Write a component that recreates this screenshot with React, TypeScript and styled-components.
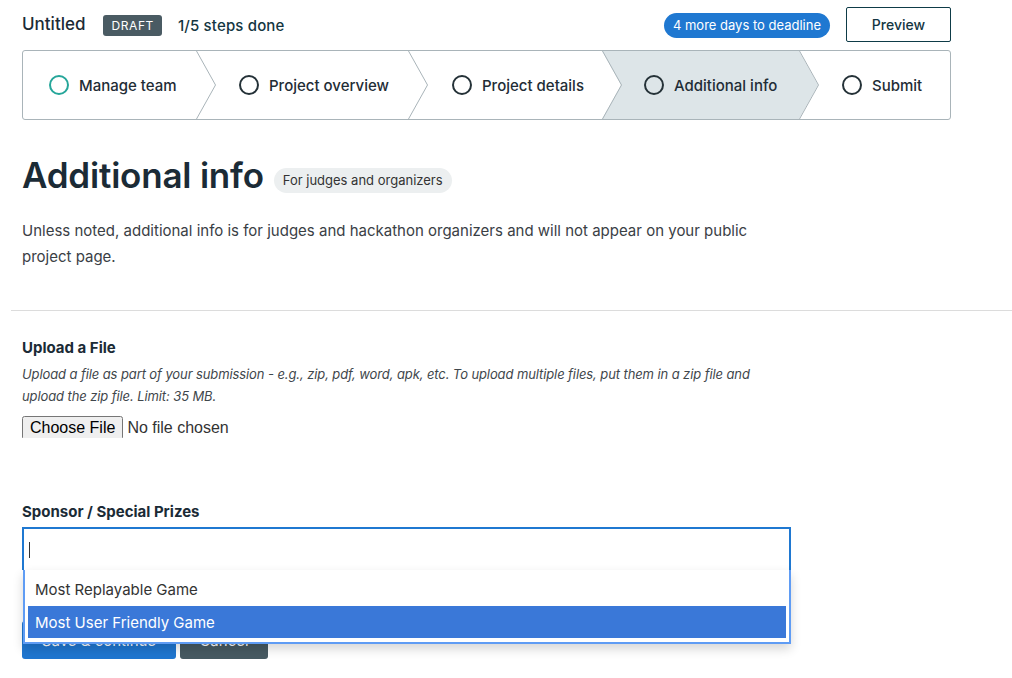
import React from 'react';
import styled, { createGlobalStyle } from 'styled-components';

const Global = createGlobalStyle`
  html, body { margin: 0; padding: 0; background: #fff; }
  body { font-family: Inter, "Noto Sans", sans-serif; color: #1b2b36; }
  * { box-sizing: border-box; }
`;

const Page = styled.div`
  padding-left: 22px;
  width: 1012px;
  display: flex;
  flex-direction: column;
`;

const TopBar = styled.div`
  width: 929px;
  height: 50px;
  display: flex;
  align-items: center;
  justify-content: space-between;
`;

const Group = styled.div<{ $gap: number }>`
  display: flex;
  align-items: center;
  gap: ${p => p.$gap}px;
`;

const Title = styled.div`
  font-size: 17px;
  font-weight: 500;
  color: #1b2b36;
  margin-top: -3px;
  margin-right: 2px;
`;

const Badge = styled.span`
  background: #4a5b63;
  color: #fff;
  font-size: 12px;
  letter-spacing: 0.6px;
  height: 21px;
  padding: 0 8px;
  border-radius: 3px;
  display: inline-flex;
  align-items: center;
`;

const StepsDone = styled.span`
  font-size: 15px;
  font-weight: 500;
  color: #143642;
  letter-spacing: 0.15px;
`;

const Pill = styled.span`
  background: #1f78d1;
  color: #fff;
  font-size: 13px;
  height: 25px;
  padding: 0 9px;
  border-radius: 13px;
  display: inline-flex;
  align-items: center;
`;

const PreviewButton = styled.button`
  width: 105px;
  height: 35px;
  border: 1px solid #0e3b47;
  border-radius: 2px;
  background: #fff;
  color: #143642;
  font-family: inherit;
  font-size: 14px;
  font-weight: 500;
  margin-top: -2px;
`;

const Stepper = styled.div`
  width: 929px;
  height: 70px;
  border: 1px solid #a9b4b9;
  border-radius: 3px;
  display: flex;
  overflow: hidden;
`;

const Step = styled.div<{ $w?: number; $pad: number; $active?: boolean }>`
  position: relative;
  flex: ${p => (p.$w ? `0 0 ${p.$w}px` : '1 1 auto')};
  display: flex;
  align-items: center;
  gap: 10px;
  padding-left: ${p => p.$pad}px;
  font-size: 15px;
  font-weight: 500;
  color: #1f2d36;
  &::before {
    content: '';
    display: ${p => (p.$active ? 'block' : 'none')};
    position: absolute;
    left: 0;
    top: 0;
    bottom: 0;
    width: calc(100% + 19px);
    background: #dde5e8;
    clip-path: polygon(0 0, calc(100% - 19px) 0, 100% 50%, calc(100% - 19px) 100%, 0 100%, 19px 50%);
    z-index: 0;
  }
  & > * { position: relative; z-index: 1; }
`;

const Separator = styled.svg`
  position: absolute !important;
  top: 0;
  right: -20px;
  width: 20px;
  height: 68px;
  z-index: 2 !important;
`;

const Heading = styled.div`
  margin-top: 33px;
  display: flex;
  align-items: center;
  gap: 10px;
`;

const H1 = styled.h1`
  margin: 0;
  font-size: 35px;
  line-height: 44px;
  font-weight: 600;
  color: #1b2b36;
  letter-spacing: -0.2px;
`;

const Tag = styled.span`
  margin-top: 10px;
  background: #eceff0;
  color: #333;
  font-size: 13px;
  height: 25px;
  padding: 0 9px;
  border-radius: 13px;
  display: inline-flex;
  align-items: center;
`;

const Intro = styled.p`
  margin: 21px 0 0;
  max-width: 740px;
  font-size: 15px;
  line-height: 26px;
  color: #3a4045;
`;

const Divider = styled.hr`
  margin: 40px 0 0 -11px;
  width: calc(100% + 11px);
  border: 0;
  border-top: 1px solid #dcdcdc;
  height: 0;
`;

const Label = styled.div<{ $mt: number }>`
  margin-top: ${p => p.$mt}px;
  font-size: 15px;
  line-height: 20px;
  font-weight: 700;
  color: #1b2b36;
`;

const Help = styled.div`
  margin-top: 5px;
  max-width: 760px;
  font-size: 13px;
  line-height: 22px;
  font-style: italic;
  color: #3f474c;
  letter-spacing: -0.1px;
`;

const FileInput = styled.input`
  margin-top: 9px;
  font-family: "Liberation Sans", Arial, sans-serif;
  font-size: 16px;
  color: #333;
  height: 22px;
`;

const SelectWrap = styled.div`
  position: relative;
  margin-top: 5px;
  width: 769px;
`;

const Control = styled.div`
  height: 43px;
  border: 2px solid #1f78d1;
  border-bottom: 0;
  padding-left: 5px;
  display: flex;
  align-items: center;
`;

const Caret = styled.span`
  width: 1px;
  height: 16px;
  background: #333;
`;

const Dropdown = styled.div`
  position: absolute;
  top: 43px;
  left: 1px;
  right: 0;
  background: #fff;
  border: 2px solid #5f9cf4;
  border-top: 0;
  padding: 3px 3px 4px;
  box-shadow: 0 5px 10px rgba(0, 0, 0, 0.16);
  z-index: 5;
`;

const Option = styled.div<{ $selected?: boolean }>`
  height: ${p => (p.$selected ? 32 : 33)}px;
  padding-left: 7px;
  display: flex;
  align-items: center;
  font-size: 15px;
  color: ${p => (p.$selected ? '#fff' : '#333')};
  background: ${p => (p.$selected ? '#3a78d8' : 'transparent')};
`;

const Actions = styled.div`
  margin-top: 51px;
  display: flex;
  gap: 4px;
`;

const ActionButton = styled.button<{ $primary?: boolean }>`
  height: 38px;
  width: ${p => (p.$primary ? 154 : 88)}px;
  border: 0;
  border-radius: 3px;
  background: ${p => (p.$primary ? '#1f76d0' : '#475a62')};
  color: #fff;
  font-family: inherit;
  font-size: 15px;
`;

const Circle = ({ color }: { color: string }) => (
  <svg width="20" height="20" viewBox="0 0 20 20">
    <circle cx="10" cy="10" r="9" fill="none" stroke={color} strokeWidth="2" />
  </svg>
);

const Chevron = () => (
  <Separator viewBox="0 0 20 68">
    <polyline points="0.5,0 19.5,34 0.5,68" fill="none" stroke="#a9b4b9" strokeWidth="1" />
  </Separator>
);

const steps = [
  { label: 'Manage team', w: 173, pad: 26, color: '#26a69a' },
  { label: 'Project overview', w: 212, pad: 43, color: '#253238' },
  { label: 'Project details', w: 194, pad: 44, color: '#253238' },
  { label: 'Additional info', w: 197, pad: 42, color: '#253238', active: true },
  { label: 'Submit', pad: 43, color: '#253238', last: true },
];

export default function App() {
  return (
    <>
      <Global />
      <Page>
        <TopBar>
          <Group $gap={16}>
            <Title>Untitled</Title>
            <Badge>DRAFT</Badge>
            <StepsDone>1/5 steps done</StepsDone>
          </Group>
          <Group $gap={16}>
            <Pill>4 more days to deadline</Pill>
            <PreviewButton>Preview</PreviewButton>
          </Group>
        </TopBar>
        <Stepper>
          {steps.map(s => (
            <Step key={s.label} $w={s.w} $pad={s.pad} $active={s.active}>
              <Circle color={s.color} />
              <span>{s.label}</span>
              {!s.last && <Chevron />}
            </Step>
          ))}
        </Stepper>
        <Heading>
          <H1>Additional info</H1>
          <Tag>For judges and organizers</Tag>
        </Heading>
        <Intro>
          Unless noted, additional info is for judges and hackathon organizers and will not appear on your public
          project page.
        </Intro>
        <Divider />
        <Label $mt={27}>Upload a File</Label>
        <Help>
          Upload a file as part of your submission - e.g., zip, pdf, word, apk, etc. To upload multiple files, put them
          in a zip file and upload the zip file. Limit: 35 MB.
        </Help>
        <div>
          <FileInput type="file" />
        </div>
        <Label $mt={64}>Sponsor / Special Prizes</Label>
        <SelectWrap>
          <Control>
            <Caret />
          </Control>
          <Dropdown>
            <Option>Most Replayable Game</Option>
            <Option $selected>Most User Friendly Game</Option>
          </Dropdown>
        </SelectWrap>
        <Actions>
          <ActionButton $primary>Save &amp; continue</ActionButton>
          <ActionButton>Cancel</ActionButton>
        </Actions>
      </Page>
    </>
  );
}
